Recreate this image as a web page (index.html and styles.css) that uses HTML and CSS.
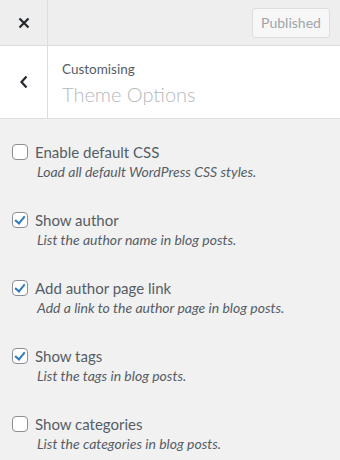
FILE: index.html
```html
<!DOCTYPE html>
<html>
<head>
<meta charset="utf-8">
<link rel="stylesheet" href="styles.css">
</head>
<body>
<div class="panel">
  <div class="topbar">
    <button class="close" aria-label="Close">
      <svg width="12" height="12" viewBox="0 0 12 12"><path d="M1.5 1.5 L10.5 10.5 M10.5 1.5 L1.5 10.5" stroke="#23282d" stroke-width="2.2" stroke-linecap="butt"/></svg>
    </button>
    <div class="spacer"></div>
    <button class="published">Published</button>
  </div>
  <div class="header">
    <button class="back" aria-label="Back">
      <svg width="10" height="14" viewBox="0 0 10 14"><path d="M7.5 1.5 L2.5 7 L7.5 12.5" fill="none" stroke="#23282d" stroke-width="2.2"/></svg>
    </button>
    <div class="titles">
      <div class="crumb">Customising</div>
      <div class="title">Theme Options</div>
    </div>
  </div>
  <ul class="options">
    <li class="option">
      <label class="row"><span class="box"></span><span class="label">Enable default CSS</span></label>
      <div class="desc">Load all default WordPress CSS styles.</div>
    </li>
    <li class="option">
      <label class="row"><span class="box checked"></span><span class="label">Show author</span></label>
      <div class="desc">List the author name in blog posts.</div>
    </li>
    <li class="option">
      <label class="row"><span class="box checked"></span><span class="label">Add author page link</span></label>
      <div class="desc">Add a link to the author page in blog posts.</div>
    </li>
    <li class="option">
      <label class="row"><span class="box checked"></span><span class="label">Show tags</span></label>
      <div class="desc">List the tags in blog posts.</div>
    </li>
    <li class="option">
      <label class="row"><span class="box"></span><span class="label">Show categories</span></label>
      <div class="desc">List the categories in blog posts.</div>
    </li>
  </ul>
</div>
</body>
</html>
```
FILE: styles.css
```css
* { box-sizing: border-box; }
html, body { margin: 0; padding: 0; }
body {
  width: 340px;
  height: 460px;
  overflow: hidden;
  background: #f1f1f1;
  font-family: "Lato", "Open Sans", sans-serif;
  color: #555d66;
}
.panel { width: 340px; }
.topbar {
  display: flex;
  align-items: center;
  height: 46px;
  background: #eeeeee;
  border-bottom: 1px solid #dddddd;
}
.close {
  width: 48px;
  height: 45px;
  border: 0;
  border-right: 1px solid #dddddd;
  background: transparent;
  display: flex;
  align-items: center;
  justify-content: center;
  padding: 0;
}
.spacer { flex: 1; }
.published {
  margin-right: 10px;
  height: 30px;
  width: 78px;
  padding: 0;
  border: 1px solid #dddddd;
  border-radius: 3px;
  background: #f7f7f7;
  color: #a0a5aa;
  font-family: inherit;
  font-size: 14px;
}
.header {
  display: flex;
  height: 73px;
  background: #ffffff;
  border-bottom: 1px solid #dddddd;
}
.back {
  width: 48px;
  border: 0;
  border-right: 1px solid #dddddd;
  background: transparent;
  display: flex;
  align-items: center;
  justify-content: center;
  padding: 0;
}
.titles { padding: 14px 0 0 14px; }
.crumb { font-size: 13.5px; line-height: 18px; color: #555d66; }
.title { font-size: 20px; line-height: 28px; color: #b4b9be; font-weight: 300; margin-top: 2px; }
.options {
  list-style: none;
  margin: 0;
  padding: 23px 12px 0 12px;
}
.option { height: 68px; }
.row { display: flex; align-items: center; gap: 7px; height: 20px; }
.box {
  width: 16px;
  height: 16px;
  border: 1px solid #8c8f94;
  border-radius: 4px;
  background: #ffffff;
  position: relative;
}
.box.checked::after {
  content: "";
  position: absolute;
  left: 4px;
  top: 1px;
  width: 4px;
  height: 8px;
  border: solid #2e7ac0;
  border-width: 0 2.5px 2.5px 0;
  transform: rotate(40deg);
}
.label { font-size: 15px; color: #555d66; }
.desc { font-size: 14px; font-style: italic; color: #555d66; margin: 1px 0 0 25px; line-height: 18px; }
```
